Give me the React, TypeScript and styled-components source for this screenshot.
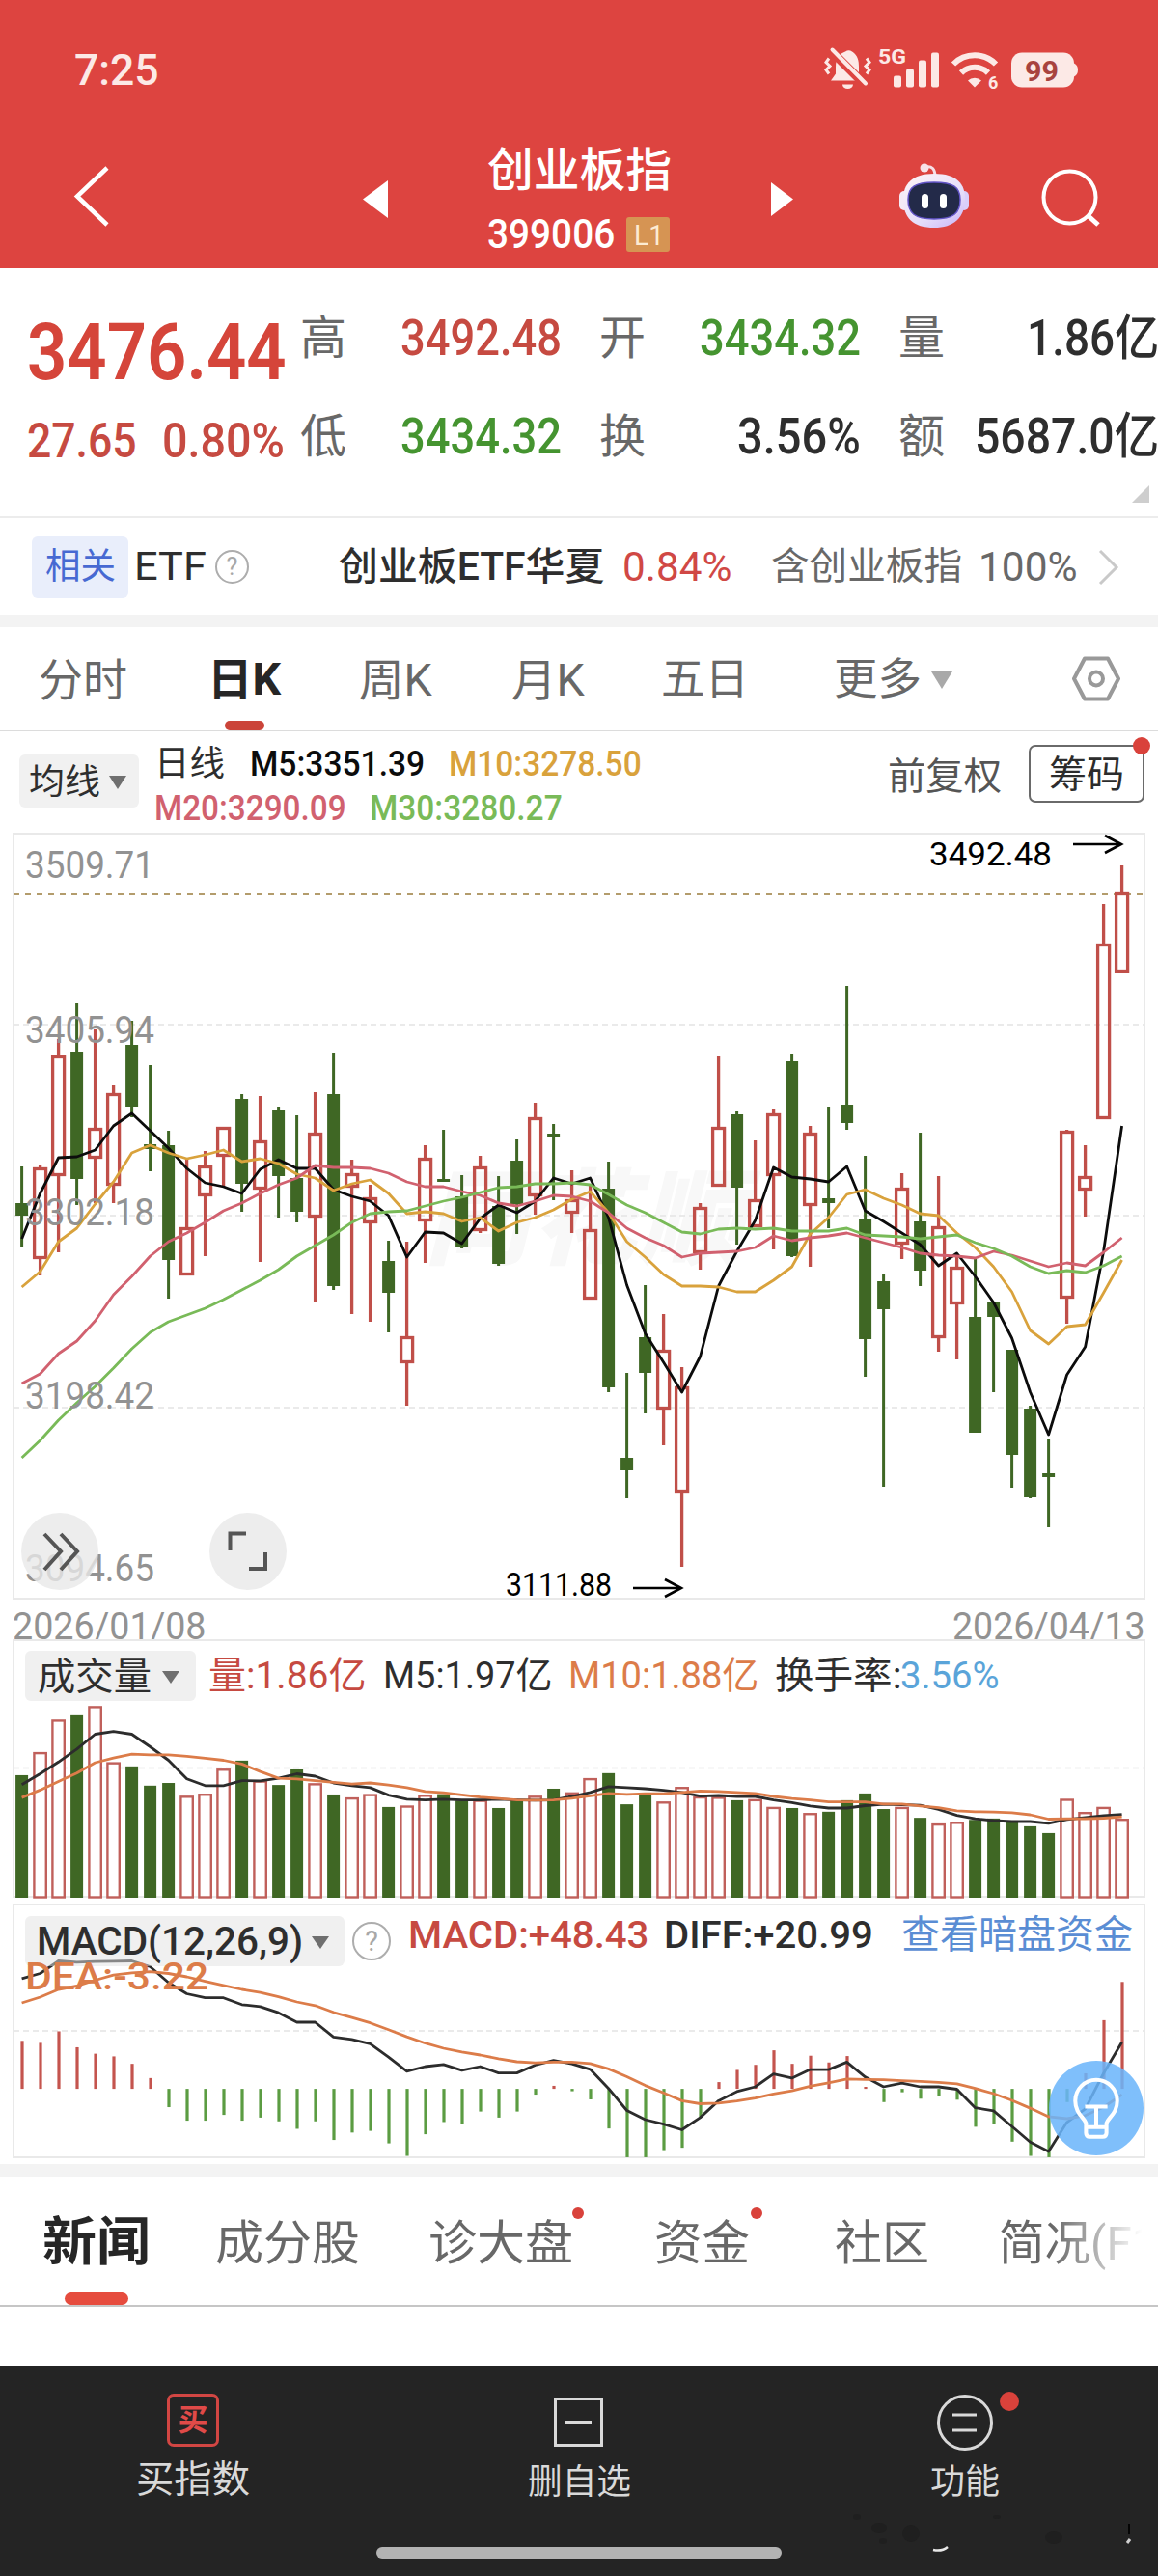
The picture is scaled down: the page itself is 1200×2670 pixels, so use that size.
import React, { useLayoutEffect, useRef, useState } from 'react';
import styled, { createGlobalStyle } from 'styled-components';

const FONT = "'Roboto', 'Noto Sans CJK SC', sans-serif";

const C = {
  header: '#dd4440',
  red: '#c64a41',
  bright: '#d5453a',
  green: '#459430',
  ink: '#2e2e2e',
  grey: '#686868',
  axis: '#999999',
  ma5: '#0c0c0c',
  ma10: '#d9a23c',
  ma20: '#d1616f',
  ma30: '#79ba58',
  orange: '#dc7c49',
  candleUp: '#c04f49',
  candleDown: '#3f6724',
};

const GlobalStyle = createGlobalStyle`
  * { box-sizing: border-box; }
  body { margin: 0; background: #fff; font-family: ${FONT}; }
  svg { display: block; }
`;

/* ---------- text that is condensed or widened to an exact advance ---------- */

const FitBox = styled.span<{ $w: number; $size: number; $color?: string; $weight: number; $ml: number }>`
  display: block;
  flex: none;
  width: ${(p) => p.$w}px;
  margin-left: ${(p) => p.$ml}px;
  height: ${(p) => Math.round(p.$size * 1.1)}px;
  line-height: ${(p) => Math.round(p.$size * 1.1)}px;
  font-size: ${(p) => p.$size}px;
  font-weight: ${(p) => p.$weight};
  color: ${(p) => p.$color ?? 'inherit'};
  white-space: nowrap;
`;

const FitInner = styled.span`
  display: inline-block;
  white-space: pre;
  vertical-align: top;
  transform-origin: 0 50%;
`;

type FitProps = { w: number; size: number; color?: string; weight?: number; ml?: number; children: string };

function Fit({ w, size, color, weight = 400, ml = 0, children }: FitProps) {
  const ref = useRef<HTMLSpanElement>(null);
  const [scale, setScale] = useState(1);
  useLayoutEffect(() => {
    if (ref.current) setScale(w / ref.current.offsetWidth);
  }, [w, size, children]);
  return (
    <FitBox $w={w} $size={size} $color={color} $weight={weight} $ml={ml}>
      <FitInner ref={ref} style={{ transform: `scaleX(${scale})` }}>
        {children}
      </FitInner>
    </FitBox>
  );
}

/* ---------- layout parts ---------- */

const Screen = styled.main`
  display: flex;
  flex-direction: column;
  width: 1200px;
  height: 2670px;
  overflow: hidden;
  background: #fff;
`;

const Header = styled.header`
  height: 278px;
  flex: none;
  background: ${C.header};
  color: #fff;
`;

const StatusBar = styled.div`
  display: flex;
  justify-content: space-between;
  height: 146px;
  padding: 0 80px 0 77px;
  align-items: center;
  color: #fce9e6;
`;

const NavBar = styled.div`
  display: flex;
  height: 132px;
  align-items: flex-start;
`;

const TitleBlock = styled.div`
  display: flex;
  flex-direction: column;
  width: 192px;
  margin: 4px 100px 0 101px;
`;

const CodeRow = styled.div`
  display: flex;
  align-items: center;
  margin-top: 20px;
  height: 40px;
`;

const LevelBadge = styled.span`
  display: flex;
  align-items: center;
  width: 45px;
  height: 36px;
  margin-left: 12px;
  padding-left: 8px;
  border-radius: 3px;
  background: #d69453;
`;

const Quote = styled.section`
  display: grid;
  grid-template-columns: 311px 1fr;
  height: 259px;
  flex: none;
  border-bottom: 2px solid #ececec;
  position: relative;
`;

const PriceColumn = styled.div`
  display: flex;
  flex-direction: column;
  padding: 43px 0 0 28px;
`;

const ChangeRow = styled.div`
  display: flex;
  margin-top: 20px;
  gap: 26px;
`;

const StatGrid = styled.div`
  display: grid;
  grid-template-columns: 271px 271px 270px;
  grid-template-rows: 53px 53px;
  column-gap: 39px;
  row-gap: 49px;
  padding-top: 46px;
`;

const Stat = styled.div`
  display: flex;
  justify-content: space-between;
  align-items: center;
`;

const Corner = styled.i`
  position: absolute;
  right: 9px;
  bottom: 14px;
  border-left: 18px solid transparent;
  border-bottom: 18px solid #cecece;
`;

const EtfRow = styled.section`
  display: flex;
  align-items: center;
  height: 100px;
  flex: none;
  padding: 1px 0 0 33px;
`;

const RelatedTag = styled.span`
  display: flex;
  align-items: center;
  justify-content: center;
  width: 100px;
  height: 64px;
  border-radius: 6px;
  background: #e9eefb;
`;

const Band = styled.div`
  height: 13px;
  flex: none;
  background: #f3f3f3;
`;

const PeriodTabs = styled.nav`
  display: flex;
  align-items: center;
  height: 108px;
  flex: none;
  padding: 3px 0 0 40px;
  border-bottom: 1px solid #dcdcdc;
  color: ${C.grey};
`;

const ActivePeriod = styled.div`
  display: flex;
  flex-direction: column;
  align-items: center;
  align-self: flex-end;
  margin-left: 83px;
  width: 76px;
  height: 78px;
  justify-content: space-between;
`;

const Underline = styled.i<{ $w: number; $h: number; $color: string }>`
  width: ${(p) => p.$w}px;
  height: ${(p) => p.$h}px;
  border-radius: ${(p) => p.$h / 2}px;
  background: ${(p) => p.$color};
`;

const Triangle = styled.i<{ $half: number; $h: number; $color: string; $ml: number }>`
  flex: none;
  margin-left: ${(p) => p.$ml}px;
  border-left: ${(p) => p.$half}px solid transparent;
  border-right: ${(p) => p.$half}px solid transparent;
  border-top: ${(p) => p.$h}px solid ${(p) => p.$color};
`;

const Legend = styled.section`
  display: flex;
  height: 102px;
  flex: none;
  padding-left: 20px;
`;

const AverageButton = styled.button`
  display: flex;
  align-items: center;
  width: 124px;
  height: 55px;
  margin-top: 24px;
  padding: 2px 0 0 9px;
  border: 0;
  border-radius: 6px;
  background: #f1f1f1;
  font-family: inherit;
`;

const LegendLines = styled.div`
  display: flex;
  flex-direction: column;
  gap: 5px;
  width: 776px;
  padding: 13px 0 0 16px;
`;

const LegendLine = styled.div`
  display: flex;
  height: 41px;
  align-items: center;
`;

const AdjustLabel = styled.div`
  margin: 26px 28px 0 0;
  height: 43px;
`;

const ChipButton = styled.button`
  position: relative;
  display: flex;
  align-items: center;
  justify-content: center;
  width: 120px;
  height: 60px;
  margin-top: 14px;
  padding: 2px 0 0;
  border: 2px solid #6a6a6a;
  border-radius: 7px;
  background: #fff;
  font-family: inherit;
`;

const Dot = styled.i<{ $size: number; $top: number; $right: number }>`
  position: absolute;
  top: ${(p) => p.$top}px;
  right: ${(p) => p.$right}px;
  width: ${(p) => p.$size}px;
  height: ${(p) => p.$size}px;
  border-radius: 50%;
  background: #d9423b;
`;

const Panel = styled.section<{ $h: number }>`
  position: relative;
  height: ${(p) => p.$h}px;
  flex: none;
`;

const PanelHeader = styled.div<{ $top: number }>`
  position: absolute;
  top: ${(p) => p.$top}px;
  left: 26px;
  display: flex;
  align-items: center;
  height: 52px;
`;

const Readouts = styled.div`
  display: flex;
  align-items: center;
  margin-bottom: 12px;
`;

const IndicatorButton = styled.button<{ $w: number }>`
  display: flex;
  align-items: center;
  width: ${(p) => p.$w}px;
  height: 52px;
  padding: 2px 0 0 15px;
  border: 0;
  border-radius: 6px;
  background: rgba(226, 226, 226, 0.5);
  font-family: inherit;
`;

const DeaReadout = styled.div`
  position: absolute;
  left: 26px;
  top: 59px;
`;

const RoundButton = styled.button<{ $left: number }>`
  position: absolute;
  top: 708px;
  left: ${(p) => p.$left}px;
  width: 80px;
  height: 80px;
  padding: 0;
  border: 0;
  border-radius: 50%;
  background: rgba(232, 232, 232, 0.8);
`;

const BulbButton = styled.button`
  position: absolute;
  top: 167px;
  left: 1087px;
  width: 98px;
  height: 98px;
  padding: 0;
  border: 0;
  border-radius: 50%;
  background: rgba(106, 180, 250, 0.86);
`;

const DateRow = styled.div`
  display: flex;
  justify-content: space-between;
  align-items: center;
  height: 41px;
  flex: none;
  padding: 15px 13px 0 13px;
`;

const NewsTabs = styled.nav`
  position: relative;
  display: flex;
  align-items: flex-start;
  height: 135px;
  flex: none;
  padding: 43px 0 0 44px;
  border-bottom: 2px solid #c6c6c6;
  color: ${C.grey};
  overflow: hidden;
`;

const ActiveNews = styled.div`
  display: flex;
  flex-direction: column;
  align-items: center;
  justify-content: space-between;
  width: 112px;
  height: 94px;
  margin-top: -4px;
`;

const DottedTab = styled.div<{ $ml: number }>`
  position: relative;
  margin-left: ${(p) => p.$ml}px;
`;

const Fade = styled.i`
  position: absolute;
  right: 0;
  top: 0;
  width: 110px;
  height: 110px;
  background: linear-gradient(90deg, rgba(255, 255, 255, 0), #fff 85%);
`;

const Blank = styled.div`
  flex: 1;
`;

const BottomBar = styled.footer`
  display: flex;
  flex-direction: column;
  align-items: center;
  height: 218px;
  flex: none;
  background: #242424;
  position: relative;
`;

const Actions = styled.div`
  display: grid;
  grid-template-columns: 400px 400px 400px;
  height: 188px;
`;

const Action = styled.div<{ $label: number }>`
  display: flex;
  flex-direction: column;
  align-items: center;
  justify-content: space-between;
  height: ${(p) => p.$label}px;
  padding-top: 29px;
  color: #d9d9d9;
`;

const ActionIcon = styled.div`
  position: relative;
  height: 58px;
`;

const BuyBox = styled.div`
  display: flex;
  align-items: center;
  justify-content: center;
  width: 54px;
  height: 55px;
  border: 3px solid #d24643;
  border-radius: 7px;
`;

const HomeIndicator = styled.i`
  width: 420px;
  height: 12px;
  border-radius: 6px;
  background: #b3b3b3;
`;

const Smudge = styled.div`
  position: absolute;
  left: 880px;
  top: 150px;
`;

/* ---------- icons ---------- */

const SysIcons = () => (
  <svg width="266" height="50" viewBox="854 47.500 266 50" fill="#fce9e6" fontFamily={FONT}>
    <path d="M861 83 L866 76 V69 C866 60 870 55 876 53 A6 6 0 0 1 883 53 C889 57 890 62 890 69 V76 L896 83 Z" />
    <path d="M873 87 h11 a5.5 4.5 0 0 1 -11 0z" />
    <path d="M862 53 L895 86" stroke={C.header} strokeWidth="9" />
    <path d="M862.5 51 L897 86" stroke="#fce9e6" strokeWidth="4" strokeLinecap="round" />
    <path d="M859 60 l-3 4 4 4 -4 4 3 4 M898 60 l3 4 -4 4 4 4 -3 4" fill="none" stroke="#fce9e6" strokeWidth="3" />
    <text x="910" y="65" fontSize="21" fontWeight="700" textLength="29" lengthAdjust="spacingAndGlyphs">5G</text>
    <rect x="926" y="78" width="8" height="12" rx="2" />
    <rect x="939" y="71" width="8" height="19" rx="2" />
    <rect x="952" y="62" width="8" height="28" rx="2" />
    <rect x="965" y="54" width="8" height="36" rx="2" />
    <g fill="none" stroke="#fce9e6" strokeWidth="6">
      <path d="M988 66 A31 31 0 0 1 1032 66" />
      <path d="M996 75 A20 20 0 0 1 1024 75" />
    </g>
    <path d="M1003 83 A10 10 0 0 1 1017 83 L1010 90 Z" />
    <text x="1024" y="91" fontSize="18" fontWeight="700">6</text>
    <rect x="1048" y="54" width="65" height="36" rx="11" />
    <path d="M1113 65 q4 2 4 7 t-4 7z" />
    <text x="1062" y="83" fontSize="30" fontWeight="700" fill="#a8433f" textLength="35" lengthAdjust="spacingAndGlyphs">99</text>
  </svg>
);

const NavLeft = () => (
  <svg width="404" height="110" viewBox="0 146 404 110">
    <path d="M111 174 L80 203.5 L111 233" fill="none" stroke="#fff" strokeWidth="4.5" />
    <path d="M376 206.500 L402 187 V226 Z" fill="#fff" />
  </svg>
);

const NavRight = () => (
  <svg width="397" height="110" viewBox="799 146 397 110">
    <defs>
      <linearGradient id="shell" x1="0" y1="0" x2="0.8" y2="1">
        <stop offset="0" stopColor="#fff5f6" />
        <stop offset="0.7" stopColor="#e4dcfa" />
        <stop offset="1" stopColor="#cfbdf8" />
      </linearGradient>
    </defs>
    <path d="M801 189 L824 206.500 L801 224 Z" fill="#fff" />
    <path d="M961 173 Q971 171 971 183" fill="none" stroke="#f6dfe6" strokeWidth="3" />
    <circle cx="960" cy="174" r="4.500" fill="#f7e3e8" />
    <rect x="934" y="198" width="10" height="20" rx="5" fill="#f4eaf6" />
    <rect x="996" y="198" width="10" height="20" rx="5" fill="#d9cffb" />
    <path d="M970 180 C994 180 1002 191 1002 206 C1002 226 990 236 970 236 C948 236 938 226 938 206 C938 191 947 180 970 180Z" fill="url(#shell)" />
    <path d="M970 189 C990 189 997 194 997 207 C997 221 990 227 970 227 C950 227 943 221 943 207 C943 194 950 189 970 189Z" fill="#232a49" stroke="#6254c6" strokeWidth="1.500" />
    <rect x="957" y="201" width="7" height="15" rx="3.500" fill="#fff" />
    <rect x="976" y="201" width="7" height="15" rx="3.500" fill="#fff" />
    <circle cx="1110.500" cy="204.500" r="27" fill="none" stroke="#fff" strokeWidth="4" />
    <path d="M1130 224 L1140 233" stroke="#fff" strokeWidth="5" />
  </svg>
);

const HelpCircle = styled.span<{ $size: number; $ml: number }>`
  display: flex;
  flex: none;
  align-items: center;
  justify-content: center;
  width: ${(p) => p.$size}px;
  height: ${(p) => p.$size}px;
  margin-left: ${(p) => p.$ml}px;
  border: 2px solid #adadad;
  border-radius: 50%;
  color: #a8a8a8;
  font-size: ${(p) => p.$size * 0.72}px;
  line-height: 1;
`;

const SlimChevron = styled.svg`
  margin-left: 20px;
`;

const HexIcon = styled.svg`
  margin-left: 124px;
`;

/* ---------- chart data ---------- */

type Candle = [up: 0 | 1, high: number, top: number, bottom: number, low: number];

const CANDLES: Candle[] = [
  [0, 1209, 1247, 1260, 1293], [1, 1207, 1210, 1305, 1322], [1, 1077, 1094, 1219, 1298], [0, 1040, 1090, 1222, 1249],
  [1, 1067, 1169, 1201, 1247], [1, 1125, 1133, 1229, 1247], [0, 1058, 1083, 1147, 1158], [0, 1104, 1186, 1191, 1214],
  [0, 1172, 1187, 1306, 1346], [1, 1200, 1272, 1322, 1322], [1, 1193, 1208, 1240, 1302], [1, 1168, 1168, 1199, 1230],
  [0, 1134, 1139, 1227, 1256], [1, 1136, 1182, 1233, 1308], [0, 1147, 1150, 1219, 1262], [0, 1156, 1221, 1256, 1267],
  [1, 1132, 1174, 1262, 1349], [0, 1091, 1134, 1333, 1337], [1, 1202, 1216, 1231, 1362], [1, 1228, 1241, 1268, 1370],
  [0, 1286, 1307, 1340, 1381], [1, 1287, 1385, 1413, 1457], [1, 1187, 1200, 1266, 1309], [0, 1171, 1222, 1225, 1225],
  [0, 1218, 1240, 1293, 1294], [1, 1198, 1209, 1276, 1278], [0, 1219, 1250, 1310, 1312], [0, 1181, 1203, 1248, 1279],
  [1, 1143, 1158, 1240, 1259], [0, 1165, 1175, 1178, 1244], [1, 1213, 1243, 1258, 1278], [1, 1227, 1274, 1347, 1347],
  [0, 1204, 1232, 1438, 1443], [0, 1423, 1511, 1524, 1553], [0, 1332, 1386, 1423, 1465], [1, 1362, 1399, 1461, 1498],
  [1, 1417, 1437, 1547, 1624], [1, 1247, 1251, 1299, 1316], [1, 1095, 1168, 1230, 1230], [0, 1152, 1155, 1231, 1290],
  [1, 1182, 1243, 1272, 1272], [1, 1149, 1154, 1219, 1295], [0, 1092, 1100, 1302, 1303], [1, 1167, 1174, 1250, 1313],
  [0, 1147, 1242, 1247, 1273], [0, 1022, 1145, 1164, 1171], [0, 1198, 1263, 1388, 1427], [0, 1321, 1328, 1357, 1541],
  [1, 1216, 1231, 1290, 1305], [0, 1174, 1266, 1317, 1333], [1, 1219, 1271, 1387, 1401], [1, 1300, 1313, 1352, 1409],
  [0, 1305, 1365, 1485, 1485], [0, 1350, 1350, 1365, 1443], [0, 1399, 1399, 1508, 1542], [0, 1457, 1460, 1552, 1553],
  [0, 1491, 1527, 1531, 1583], [1, 1171, 1172, 1346, 1372], [1, 1187, 1219, 1234, 1261], [1, 937, 978, 1160, 1160],
  [1, 897, 925, 1008, 1008],
];

const MA5 = [1284, 1237, 1200, 1199, 1192, 1167, 1154, 1172, 1190, 1211, 1226, 1230, 1237, 1212, 1202, 1211, 1211, 1233, 1240, 1245, 1260, 1303, 1277, 1278, 1289, 1263, 1249, 1257, 1245, 1221, 1227, 1221, 1262, 1332, 1382, 1412, 1443, 1406, 1333, 1297, 1265, 1210, 1220, 1222, 1225, 1209, 1255, 1266, 1278, 1290, 1312, 1299, 1323, 1350, 1387, 1443, 1487, 1425, 1396, 1297, 1167];
const MA10 = [1334, 1318, 1287, 1273, 1248, 1225, 1195, 1187, 1195, 1201, 1197, 1192, 1204, 1201, 1206, 1217, 1221, 1234, 1227, 1223, 1237, 1258, 1256, 1258, 1266, 1262, 1276, 1267, 1262, 1254, 1243, 1235, 1257, 1287, 1303, 1321, 1333, 1333, 1334, 1339, 1339, 1327, 1313, 1279, 1262, 1238, 1233, 1242, 1249, 1258, 1260, 1278, 1293, 1313, 1339, 1379, 1393, 1375, 1373, 1340, 1306];
const MA20 = [1434, 1424, 1403, 1390, 1369, 1342, 1323, 1302, 1287, 1278, 1267, 1255, 1247, 1237, 1228, 1221, 1208, 1210, 1210, 1211, 1216, 1225, 1230, 1230, 1235, 1239, 1247, 1250, 1245, 1239, 1240, 1245, 1257, 1273, 1283, 1291, 1303, 1299, 1298, 1297, 1293, 1281, 1286, 1283, 1281, 1278, 1283, 1288, 1293, 1299, 1301, 1302, 1304, 1297, 1301, 1307, 1313, 1309, 1312, 1298, 1283];
const MA30 = [1511, 1493, 1472, 1454, 1437, 1418, 1398, 1381, 1370, 1363, 1356, 1347, 1337, 1327, 1316, 1302, 1291, 1280, 1267, 1258, 1256, 1255, 1250, 1245, 1241, 1236, 1231, 1230, 1227, 1227, 1226, 1228, 1238, 1249, 1257, 1267, 1277, 1279, 1274, 1273, 1274, 1273, 1276, 1276, 1276, 1273, 1280, 1281, 1282, 1284, 1282, 1280, 1288, 1294, 1302, 1313, 1320, 1317, 1319, 1312, 1302];

/* The two lower panels store offsets below y = 1700, in units of 1 / 2.851 px. */
const VOLUME = [399, 331, 235, 222, 195, 361, 373, 430, 422, 460, 454, 380, 356, 415, 428, 382, 423, 456, 465, 455, 493, 489, 457, 455, 474, 472, 496, 472, 460, 439, 450, 408, 393, 485, 455, 477, 434, 462, 463, 473, 470, 493, 496, 511, 507, 473, 453, 499, 493, 525, 542, 537, 531, 527, 533, 550, 570, 469, 508, 493, 528];
const VOL5 = [427, 395, 360, 322, 278, 270, 278, 315, 355, 410, 430, 430, 415, 416, 408, 395, 402, 422, 430, 436, 458, 470, 472, 470, 472, 472, 470, 472, 473, 472, 462, 450, 433, 436, 439, 444, 450, 461, 459, 462, 462, 472, 480, 490, 496, 496, 489, 485, 486, 488, 500, 518, 528, 533, 536, 536, 541, 530, 524, 519, 515];
const VOL10 = [465, 443, 418, 393, 362, 348, 337, 339, 339, 343, 349, 355, 366, 388, 408, 410, 415, 420, 425, 422, 428, 436, 447, 451, 457, 464, 468, 472, 473, 472, 467, 460, 453, 456, 454, 454, 450, 446, 447, 450, 453, 462, 468, 472, 478, 478, 478, 484, 484, 490, 495, 504, 507, 508, 510, 516, 529, 528, 528, 526, 522];
const MACD = [1184, 1190, 1156, 1203, 1222, 1230, 1252, 1294, 1380, 1420, 1420, 1403, 1420, 1411, 1422, 1444, 1422, 1477, 1455, 1450, 1487, 1524, 1460, 1424, 1430, 1393, 1411, 1393, 1343, 1317, 1333, 1357, 1443, 1528, 1528, 1507, 1500, 1410, 1306, 1270, 1255, 1212, 1252, 1228, 1248, 1229, 1320, 1365, 1336, 1355, 1346, 1358, 1438, 1430, 1482, 1524, 1528, 1365, 1280, 1123, 1010];
const DIFF = [1000, 985, 948, 952, 950, 949, 948, 965, 1012, 1045, 1057, 1057, 1077, 1083, 1101, 1129, 1129, 1173, 1180, 1193, 1232, 1274, 1260, 1254, 1271, 1260, 1279, 1279, 1256, 1242, 1252, 1268, 1325, 1390, 1417, 1430, 1447, 1411, 1361, 1334, 1320, 1282, 1294, 1269, 1269, 1247, 1291, 1320, 1309, 1320, 1320, 1327, 1382, 1391, 1437, 1483, 1511, 1425, 1385, 1280, 1188];
const DEA = [1072, 1055, 1032, 1022, 1005, 990, 983, 980, 985, 995, 1008, 1020, 1032, 1041, 1054, 1069, 1080, 1100, 1115, 1131, 1151, 1172, 1191, 1206, 1217, 1226, 1237, 1246, 1249, 1247, 1247, 1251, 1267, 1290, 1316, 1338, 1361, 1370, 1368, 1362, 1353, 1341, 1332, 1318, 1308, 1297, 1298, 1299, 1302, 1304, 1307, 1311, 1325, 1340, 1360, 1383, 1408, 1414, 1405, 1380, 1343];

const xAt = (i: number) => 22.6 + i * 19;
const low = (v: number) => 1700 + v / 2.851;
const points = (ys: number[]) => ys.map((y, i) => `${xAt(i).toFixed(1)},${y.toFixed(1)}`).join(' ');

const Line = ({ ys, color, width = 2.8 }: { ys: number[]; color: string; width?: number }) => (
  <polyline points={points(ys)} fill="none" stroke={color} strokeWidth={width} strokeLinejoin="round" />
);

const AxisLabel = ({ y, children }: { y: number; children: string }) => (
  <text x="26" y={y + 14} fontSize="39" fontWeight="400" fill="#929292" textLength="134" lengthAdjust="spacingAndGlyphs">
    {children}
  </text>
);

const CandleChart = () => (
  <svg width="1200" height="800" viewBox="0 860 1200 800" fontFamily={FONT}>
    <rect x="14" y="864" width="1172" height="793" fill="#fff" stroke="#e9e9e9" strokeWidth="2" />
    <text x="440" y="1302" fontSize="108" fontWeight="900" fontStyle="italic" fill="#f8f8f8" textLength="330">同花顺</text>
    {[1062, 1260, 1459].map((y) => (
      <path key={y} d={`M14 ${y}H1186`} stroke="#e3e3e3" strokeWidth="1.500" strokeDasharray="6 4" />
    ))}
    <path d="M14 927H1186" stroke="#b39c6c" strokeWidth="2" strokeDasharray="6 6" />
    {CANDLES.map(([up, high, top, bottom, lo], i) => {
      const x = xAt(i);
      return up ? (
        <g key={i} stroke={C.candleUp} strokeWidth="3.300" fill="none">
          <path d={`M${x} ${high}V${top}M${x} ${bottom}V${lo}`} />
          <rect x={x - 6} y={top + 1.5} width="12" height={bottom - top - 3} />
        </g>
      ) : (
        <g key={i} fill={C.candleDown}>
          <rect x={x - 1.5} y={high} width="3" height={lo - high} />
          <rect x={x - 6.5} y={top} width="13" height={bottom - top} />
        </g>
      );
    })}
    <Line ys={MA5} color={C.ma5} />
    <Line ys={MA10} color={C.ma10} />
    <Line ys={MA20} color={C.ma20} />
    <Line ys={MA30} color={C.ma30} />
    <AxisLabel y={896}>3509.71</AxisLabel>
    <AxisLabel y={1067}>3405.94</AxisLabel>
    <AxisLabel y={1256}>3302.18</AxisLabel>
    <AxisLabel y={1445.5}>3198.42</AxisLabel>
    <AxisLabel y={1625}>3094.65</AxisLabel>
    <g fill="#000" fontSize="34">
      <text x="963" y="897" textLength="127" lengthAdjust="spacingAndGlyphs">3492.48</text>
      <text x="524" y="1654" textLength="110" lengthAdjust="spacingAndGlyphs">3111.88</text>
    </g>
    <path d="M1112 875H1161M1145 866L1162 875L1145 884M656 1646H705M689 1637L706 1646L689 1655" fill="none" stroke="#000" strokeWidth="2.600" />
  </svg>
);

const VolumeChart = () => (
  <svg width="1200" height="270" viewBox="0 1699 1200 270">
    <rect x="14" y="1700" width="1172" height="266" fill="#fff" stroke="#e9e9e9" strokeWidth="2" />
    <path d="M14 1832.500H1186" stroke="#dedede" strokeWidth="1.500" strokeDasharray="6 4" />
    {VOLUME.map((v, i) =>
      CANDLES[i][0] ? (
        <rect key={i} x={xAt(i) - 6.2} y={low(v) + 1} width="12.400" height={1965.5 - low(v)} fill="#fff" stroke="#c0605b" strokeWidth="2.400" />
      ) : (
        <rect key={i} x={xAt(i) - 6.5} y={low(v)} width="13" height={1967 - low(v)} fill={C.candleDown} />
      ),
    )}
    <Line ys={VOL5.map(low)} color="#2c2c2c" />
    <Line ys={VOL10.map(low)} color={C.orange} />
  </svg>
);

const MacdChart = () => (
  <svg width="1200" height="270" viewBox="0 1969 1200 270">
    <rect x="14" y="1974" width="1172" height="262" fill="#fff" stroke="#e9e9e9" strokeWidth="2" />
    <path d="M14 2105H1186" stroke="#e3e3e3" strokeWidth="1.500" strokeDasharray="6 4" />
    {MACD.map((v, i) => (
      <path key={i} d={`M${xAt(i) + 0.4} ${low(1326)}V${low(v)}`} stroke={v < 1326 ? '#c4544e' : '#5b9c42'} strokeWidth="3.200" />
    ))}
    <Line ys={DIFF.map(low)} color="#2c2c2c" />
    <Line ys={DEA.map(low)} color={C.orange} />
  </svg>
);

/* ---------- screen ---------- */

const Num = ({ w, color, children }: { w: number; color: string; children: string }) => (
  <Fit w={w} size={51} weight={500} color={color}>{children}</Fit>
);

export default function App() {
  return (
    <Screen>
      <GlobalStyle />
      <Header>
        <StatusBar>
          <Fit w={88} size={45} weight={500}>7:25</Fit>
          <SysIcons />
        </StatusBar>
        <NavBar>
          <NavLeft />
          <TitleBlock>
            <Fit w={191} size={48} weight={500}>创业板指</Fit>
            <CodeRow>
              <Fit w={132} size={42} weight={500}>399006</Fit>
              <LevelBadge><Fit w={31} size={30} color="#fdebd2">L1</Fit></LevelBadge>
            </CodeRow>
          </TitleBlock>
          <NavRight />
        </NavBar>
      </Header>

      <Quote>
        <PriceColumn>
          <Fit w={269} size={81} weight={600} color={C.bright}>3476.44</Fit>
          <ChangeRow>
            <Fit w={114} size={50} weight={500} color={C.red}>27.65</Fit>
            <Fit w={127} size={50} weight={500} color={C.red}>0.80%</Fit>
          </ChangeRow>
        </PriceColumn>
        <StatGrid>
          <Stat><Fit w={48} size={48} color={C.grey}>高</Fit><Num w={167} color={C.red}>3492.48</Num></Stat>
          <Stat><Fit w={48} size={48} color={C.grey}>开</Fit><Num w={167} color={C.green}>3434.32</Num></Stat>
          <Stat><Fit w={48} size={48} color={C.grey}>量</Fit><Num w={137} color={C.ink}>1.86亿</Num></Stat>
          <Stat><Fit w={48} size={48} color={C.grey}>低</Fit><Num w={167} color={C.green}>3434.32</Num></Stat>
          <Stat><Fit w={48} size={48} color={C.grey}>换</Fit><Num w={128} color={C.ink}>3.56%</Num></Stat>
          <Stat><Fit w={48} size={48} color={C.grey}>额</Fit><Num w={191} color={C.ink}>5687.0亿</Num></Stat>
        </StatGrid>
        <Corner />
      </Quote>

      <EtfRow>
        <RelatedTag><Fit w={73} size={37} color="#4769d2">相关</Fit></RelatedTag>
        <Fit w={75} size={41} ml={6} color={C.ink}>ETF</Fit>
        <HelpCircle $size={35} $ml={9}>?</HelpCircle>
        <Fit w={275} size={40} ml={93} weight={500} color={C.ink}>创业板ETF华夏</Fit>
        <Fit w={113} size={43} ml={19} color="#d04845">0.84%</Fit>
        <Fit w={198} size={39} ml={41} color={C.grey}>含创业板指</Fit>
        <Fit w={103} size={42} ml={17} color={C.grey}>100%</Fit>
        <SlimChevron width="24" height="40" viewBox="0 0 24 40" fill="none" stroke="#c9c9c9" strokeWidth="3">
          <path d="M3 3 L20 20 L3 37" />
        </SlimChevron>
      </EtfRow>
      <Band />

      <PeriodTabs>
        <Fit w={92} size={46}>分时</Fit>
        <ActivePeriod>
          <Fit w={76} size={46} weight={700} color="#262626">日K</Fit>
          <Underline $w={41} $h={10} $color="#cb4439" />
        </ActivePeriod>
        <Fit w={76} size={46} ml={81}>周K</Fit>
        <Fit w={76} size={46} ml={82}>月K</Fit>
        <Fit w={91} size={45} ml={79}>五日</Fit>
        <Fit w={91} size={45} ml={88}>更多</Fit>
        <Triangle $half={11.5} $h={18} $color="#a9a9a9" $ml={10} />
        <HexIcon width="50" height="50" viewBox="1111 680.500 50 50" fill="none" stroke="#999" strokeWidth="4">
          <path d="M1124 683 H1148 L1159 704 L1148 725 H1124 L1113 704 Z" strokeLinejoin="round" />
          <circle cx="1136" cy="704" r="7" />
        </HexIcon>
      </PeriodTabs>

      <Legend>
        <AverageButton>
          <Fit w={74} size={36} color={C.ink}>均线</Fit>
          <Triangle $half={9.5} $h={14} $color="#6f6f6f" $ml={10} />
        </AverageButton>
        <LegendLines>
          <LegendLine>
            <Fit w={73} size={36} color={C.ink}>日线</Fit>
            <Fit w={181} size={36} ml={26} weight={500} color={C.ma5}>M5:3351.39</Fit>
            <Fit w={200} size={36} ml={25} weight={500} color={C.ma10}>M10:3278.50</Fit>
          </LegendLine>
          <LegendLine>
            <Fit w={199} size={36} weight={500} color={C.ma20}>M20:3290.09</Fit>
            <Fit w={200} size={36} ml={24} weight={500} color={C.ma30}>M30:3280.27</Fit>
          </LegendLine>
        </LegendLines>
        <AdjustLabel><Fit w={118} size={39} color="#555">前复权</Fit></AdjustLabel>
        <ChipButton>
          <Fit w={78} size={39} color="#2c2c2c">筹码</Fit>
          <Dot $size={18} $top={-10} $right={-8} />
        </ChipButton>
      </Legend>

      <Panel $h={798}>
        <CandleChart />
        <RoundButton $left={22}>
          <svg width="80" height="80" viewBox="0 0 80 80" fill="none" stroke="#555" strokeWidth="4">
            <path d="M24 22 L41 40 L24 59 M41 22 L58 40 L41 59" />
          </svg>
        </RoundButton>
        <RoundButton $left={217}>
          <svg width="80" height="80" viewBox="0 0 80 80" fill="none" stroke="#555" strokeWidth="4">
            <path d="M38 21.500 H21.500 V39 M41 58 H58 V41" />
          </svg>
        </RoundButton>
      </Panel>
      <DateRow>
        <Fit w={201} size={39} color="#929292">2026/01/08</Fit>
        <Fit w={200} size={39} color="#929292">2026/04/13</Fit>
      </DateRow>

      <Panel $h={270}>
        <VolumeChart />
        <PanelHeader $top={12}>
          <IndicatorButton $w={177}>
            <Fit w={118} size={39} ml={-2} color={C.ink}>成交量</Fit>
            <Triangle $half={9.5} $h={13} $color="#6f6f6f" $ml={11} />
          </IndicatorButton>
          <Fit w={163} size={39} ml={13} color={C.red}>量:1.86亿</Fit>
          <Fit w={175} size={39} ml={18} color={C.ink}>M5:1.97亿</Fit>
          <Fit w={197} size={39} ml={17} color={C.orange}>M10:1.88亿</Fit>
          <Fit w={131} size={39} ml={17} color={C.ink}>换手率:</Fit>
          <Fit w={103} size={39} ml={-1} color="#5aa4d9">3.56%</Fit>
        </PanelHeader>
      </Panel>

      <Panel $h={274}>
        <MacdChart />
        <PanelHeader $top={17}>
          <IndicatorButton $w={331}>
            <Fit w={276} size={40} ml={-4} weight={500} color={C.ink}>MACD(12,26,9)</Fit>
            <Triangle $half={9.5} $h={13} $color="#6f6f6f" $ml={10} />
          </IndicatorButton>
          <HelpCircle $size={40} $ml={8}>?</HelpCircle>
          <Readouts>
            <Fit w={249} size={39} ml={18} weight={500} color={C.red}>MACD:+48.43</Fit>
            <Fit w={217} size={39} ml={16} weight={500} color={C.ink}>DIFF:+20.99</Fit>
            <Fit w={240} size={40} ml={29} color="#5a8dd4">查看暗盘资金</Fit>
          </Readouts>
        </PanelHeader>
        <DeaReadout><Fit w={190} size={39} weight={500} color={C.orange}>DEA:-3.22</Fit></DeaReadout>
        <BulbButton>
          <svg width="98" height="98" viewBox="0 0 97 97" fill="none" stroke="#fff" strokeWidth="4">
            <path d="M38 74 V64 C36 58 27 54 27 41 A21.500 21.500 0 0 1 70 41 C70 54 61 58 59 64 V74 Q59 78 55 78 H42 Q38 78 38 74 Z M38 68 H59 M37 47 H60 M48.500 47 V68" />
          </svg>
        </BulbButton>
      </Panel>
      <Band />

      <NewsTabs>
        <ActiveNews>
          <Fit w={112} size={54} weight={700} color="#262626">新闻</Fit>
          <Underline $w={66} $h={13} $color="#e64c3e" />
        </ActiveNews>
        <Fit w={150} size={49} ml={67}>成分股</Fit>
        <DottedTab $ml={71}>
          <Fit w={150} size={49}>诊大盘</Fit>
          <Dot $size={12} $top={-11} $right={-11} />
        </DottedTab>
        <DottedTab $ml={84}>
          <Fit w={99} size={49}>资金</Fit>
          <Dot $size={12} $top={-11} $right={-13} />
        </DottedTab>
        <Fit w={98} size={49} ml={88}>社区</Fit>
        <Fit w={164} size={49} ml={72}>简况(F1</Fit>
        <Fade />
      </NewsTabs>
      <Blank />

      <BottomBar>
        <Actions>
          <Action $label={140}>
            <ActionIcon>
              <BuyBox><Fit w={31} size={31} weight={700} color="#e04a48">买</Fit></BuyBox>
            </ActionIcon>
            <Fit w={118} size={39}>买指数</Fit>
          </Action>
          <Action $label={141}>
            <ActionIcon>
              <svg width="54" height="58" viewBox="573 2481 54 58" fill="none" stroke="#d9d9d9" strokeWidth="3">
                <rect x="575.500" y="2486.500" width="48" height="48" />
                <path d="M586 2510.500 H613" />
              </svg>
            </ActionIcon>
            <Fit w={107} size={36}>删自选</Fit>
          </Action>
          <Action $label={141}>
            <ActionIcon>
              <svg width="58" height="60" viewBox="971 2481 58 60" fill="none" stroke="#d9d9d9" strokeWidth="3">
                <circle cx="1000" cy="2511" r="27.500" />
                <path d="M987 2503 H1012 M987 2519 H1012" />
              </svg>
              <Dot $size={20} $top={-2} $right={-27} />
            </ActionIcon>
            <Fit w={72} size={36}>功能</Fit>
          </Action>
        </Actions>
        <HomeIndicator />
        <Smudge>
          <svg width="300" height="50" viewBox="880 2602 300 50" fill="none">
            <g fill="#1f1f1f">
              <ellipse cx="911" cy="2620" rx="8" ry="5" />
              <ellipse cx="915" cy="2634" rx="4" ry="3" />
              <ellipse cx="944" cy="2626" rx="9" ry="9" />
              <ellipse cx="1092" cy="2630" rx="9" ry="7" />
              <ellipse cx="888" cy="2609" rx="4" ry="3" />
              <ellipse cx="1033" cy="2609" rx="4" ry="2" />
            </g>
            <path d="M967 2643 Q976 2645 982 2640" stroke="#e8e8e8" strokeWidth="2.500" />
            <path d="M1170 2616 V2626" stroke="#050505" strokeWidth="2" />
            <path d="M1168 2636 L1171 2632" stroke="#cfcfcf" strokeWidth="3" />
          </svg>
        </Smudge>
      </BottomBar>
    </Screen>
  );
}
